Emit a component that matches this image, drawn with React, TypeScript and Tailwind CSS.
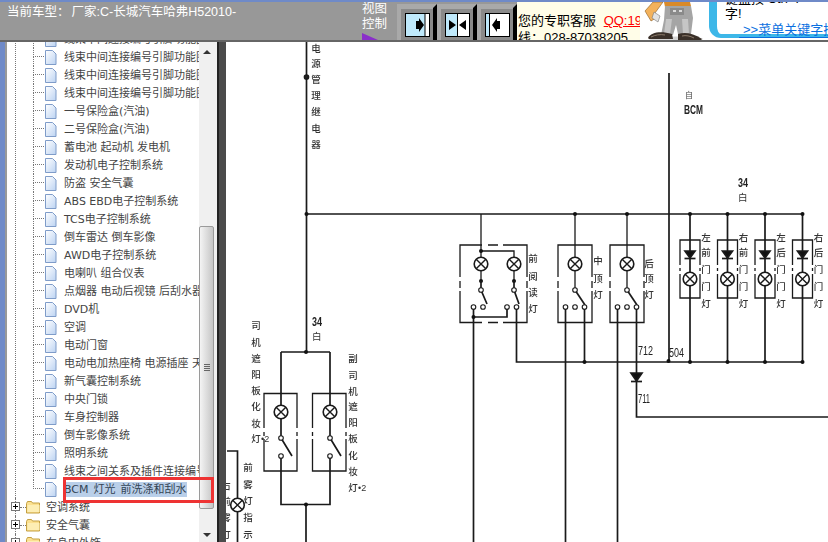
const cjk = "font-['Liberation_Sans','Noto_Sans_CJK_SC',sans-serif]"

const chapters = [
  '线束中间连接编号引脚功能图',
  '线束中间连接编号引脚功能图',
  '线束中间连接编号引脚功能图',
  '线束中间连接编号引脚功能图',
  '一号保险盒(汽油)',
  '二号保险盒(汽油)',
  '蓄电池 起动机 发电机',
  '发动机电子控制系统',
  '防盗 安全气囊',
  'ABS EBD电子控制系统',
  'TCS电子控制系统',
  '倒车雷达 倒车影像',
  'AWD电子控制系统',
  '电喇叭 组合仪表',
  '点烟器 电动后视镜 后刮水器',
  'DVD机',
  '空调',
  '电动门窗',
  '电动电加热座椅 电源插座 天窗',
  '新气囊控制系统',
  '中央门锁',
  '车身控制器',
  '倒车影像系统',
  '照明系统',
  '线束之间关系及插件连接编号',
  'BCM 灯光 前洗涤和刮水',
]

function FileIcon() {
  return (
    <svg width="13" height="15" viewBox="0 0 13 15" className="shrink-0">
      <defs>
        <linearGradient id="page" x1="0" y1="0" x2="1" y2="1">
          <stop offset="0" stopColor="#ffffff" />
          <stop offset="1" stopColor="#bcd3f2" />
        </linearGradient>
      </defs>
      <path d="M1.5.5h7l3.5 3.5v10.5h-10.500z" fill="url(#page)" stroke="#7f9cc9" />
    </svg>
  )
}

function FolderIcon() {
  return (
    <svg width="15" height="14" viewBox="0 0 15 14" className="shrink-0">
      <path d="M.5 3.500l1-2h4l1 1.500h7v10h-13z" fill="#fbe08f" stroke="#c4a043" />
      <path d="M1.500 5h12v7h-12z" fill="#fdeeb4" />
    </svg>
  )
}

function TreeRow({ label, last, selected }: { label: string; last?: boolean; selected?: boolean }) {
  return (
    <div className="flex h-[18px] items-center">
      <div className="h-full w-[11px] shrink-0">
        <div className="h-[9px] border-b border-l border-dotted border-[#777]" />
        {!last && <div className="h-[9px] border-l border-dotted border-[#777]" />}
      </div>
      <FileIcon />
      <span className={`ml-[7px] text-[11px] leading-[15px] ${selected ? 'bg-[#b9cfe9] text-[#345] [word-spacing:1.500px]' : 'text-[#444]'}`}>
        {label}
      </span>
    </div>
  )
}

function FolderRow({ label }: { label: string }) {
  return (
    <div className="flex h-[18px] items-center">
      <div className="flex h-full w-[9px] shrink-0 flex-col items-center">
        <div className="h-[4px] border-l border-dotted border-[#777]" />
        <svg width="9" height="9" viewBox="0 0 9 9" className="shrink-0">
          <rect x=".5" y=".5" width="8" height="8" fill="#fff" stroke="#777" />
          <path d="M2 4.500H7M4.500 2V7" stroke="#000" />
        </svg>
        <div className="h-[5px] border-l border-dotted border-[#777]" />
      </div>
      <div className="w-[6px] shrink-0 border-t border-dotted border-[#777]" />
      <FolderIcon />
      <span className="ml-[5px] text-[11px] leading-[15px] text-[#444]">{label}</span>
    </div>
  )
}

function ViewButton({ children }: { children: React.ReactNode }) {
  return (
    <div className="flex h-[36px] w-[40px] bg-[#a9a9a9] pl-[4px]">
      <div className="mt-[5px] flex h-[31px] w-[32px] justify-center bg-[#8a8a8a] pt-[4px]">
        <svg width="25" height="24" viewBox="0 0 25 24">
          {children}
        </svg>
      </div>
      <div className="h-full w-[4px] bg-black [clip-path:polygon(0_4px,100%_0,100%_100%,0_100%)]" />
    </div>
  )
}

function Mascot() {
  return (
    <svg width="65" height="40" viewBox="0 0 65 40" className="shrink-0">
      <rect width="65" height="40" fill="#fff" />
      <ellipse cx="36" cy="37" rx="27" ry="2.500" fill="#d4d4d4" />
      <path d="M5 9l8-9h10l-8 11 1 5-5 3z" fill="#f3b25c" stroke="#8a5a20" strokeWidth=".6" />
      <path d="M14 10l6 4-2 6-6-4z" fill="#e2e2e2" stroke="#777" strokeWidth=".6" />
      <path d="M24 0h26l1 4-26 1z" fill="#d98a2a" />
      <path d="M25 4h26l2 12-2 16H38l-2-9-3 10H21l3-15z" fill="#a5a5a5" />
      <path d="M30 6h14v7H30z" fill="#8a8a8a" />
      <path d="M33 8h3v2h-3zM39 8h3v2h-3z" fill="#dcdcdc" />
      <path d="M26 17h6l-2 15h-6zM42 17h6l1 15h-6z" fill="#c6c6c6" />
      <path d="M8 36c3-6 13-7 24-4l1 5H9z" fill="#3a3029" />
      <path d="M38 32c7-2 15-1 24 5l-1 1H38z" fill="#3a3029" />
      <path d="M11 35c4-2 9-3 14-2" stroke="#8b7a6a" fill="none" />
      <path d="M42 34c4-1 8 0 12 2" stroke="#8b7a6a" fill="none" />
    </svg>
  )
}

function Lamp({ x, y }: { x: number; y: number }) {
  return (
    <g>
      <circle cx={x} cy={y} r="6.800" fill="#fff" stroke="#1a1a1a" strokeWidth="1.600" />
      <path d={`M${x - 4.800} ${y - 4.800}L${x + 4.800} ${y + 4.800}M${x + 4.800} ${y - 4.800}L${x - 4.800} ${y + 4.800}`} stroke="#1a1a1a" strokeWidth="1.400" />
    </g>
  )
}

function Dot({ x, y }: { x: number; y: number }) {
  return <circle cx={x} cy={y} r="2" fill="#111" stroke="none" />
}

function Open({ x, y }: { x: number; y: number }) {
  return <circle cx={x} cy={y} r="2.300" fill="#fff" stroke="#1a1a1a" strokeWidth="1.100" />
}

function Label({ x, chars, ys }: { x: number; chars: string; ys: number[] }) {
  return (
    <>
      {Array.from(chars).map((c, i) => (
        <text key={i} x={x} y={ys[i] + 4} textAnchor="middle" fontSize="9.500" fontWeight="500" fill="#333" stroke="none">
          {c}
        </text>
      ))}
    </>
  )
}

function Diagram() {
  const doors = [
    { x: 690, l: '左前门门灯' },
    { x: 727.500, l: '右前门门灯' },
    { x: 765, l: '左后门门灯' },
    { x: 802.500, l: '右后门门灯' },
  ]
  const doorYs = [236, 251, 268, 285, 302]

  return (
    <svg
      width="602"
      height="501"
      viewBox="226 41 602 501"
      className="block blur-[0.3px] font-['Noto_Sans_CJK_SC',sans-serif]"
      fill="none"
      stroke="#1a1a1a"
      strokeWidth="1.700"
    >
      {/* power feed and bus */}
      <path d="M306.500 41V351M306.500 213H803M669 72V361" />
      <circle cx="306.500" cy="76" r="2" fill="#222" />
      <Dot x={306.500} y={213} />
      <Label x={316} chars="电源管理继电器" ys={[47, 62, 78, 94, 110, 127, 143]} />
      <text x="685" y="97" fontSize="8" fill="#444" stroke="none">自</text>
      <text x="684" y="113" fontSize="12" fontWeight="700" fill="#222" stroke="none" fontFamily="Liberation Sans" textLength="19" lengthAdjust="spacingAndGlyphs">BCM</text>

      <text x="738" y="186" fontSize="12" fontWeight="700" fill="#222" stroke="none" fontFamily="Liberation Sans" textLength="10" lengthAdjust="spacingAndGlyphs">34</text>
      <text x="738" y="200" fontSize="9.500" fill="#333" stroke="none">白</text>

      {/* front reading lamps */}
      <path d="M481 213V280M481 250H514V280M460 276V244H482M488 244H498M503 244H527V276M460 280V287M527 280V287M460 290V321.500H482M488 321.500H498M503 321.500H527V290" strokeWidth="1.300" />
      <Dot x={481} y={250} />
      <Lamp x={481} y={263} />
      <Lamp x={514} y={263} />
      <Dot x={481} y={280} />
      <Dot x={514} y={280} />
      <path d="M481 280V289L487 303M514 280V289L519 303" />
      <Open x={481} y={289} />
      <Open x={514} y={289} />
      <Open x={473.500} y={306} />
      <Open x={483} y={306} />
      <Open x={507} y={306} />
      <Open x={516.500} y={306} />
      <path d="M473.500 308V542M473.500 316H507V308M516.500 308V361H803" />
      <Dot x={473.500} y={316} />
      <Label x={533} chars="前阅读灯" ys={[257, 275, 291, 307]} />

      {/* centre and rear dome lamps */}
      {[
        { x: 575, l: 558, r: 592, label: '中顶灯', lx: 598, ys: [259, 277, 293] },
        { x: 627, l: 610, r: 644, label: '后顶灯', lx: 649, ys: [262, 277, 293] },
      ].map((b) => (
        <g key={b.x}>
          <path d={`M${b.x} 213V289M${b.l} 276V244H${b.r}V276M${b.l} 280V287M${b.r} 280V287M${b.l} 290V321.500H${b.r}V290`} strokeWidth="1.300" />
          <Dot x={b.x} y={213} />
          <Lamp x={b.x} y={263} />
          <path d={`M${b.x} 289L${b.x + 10} 304`} />
          <Open x={b.x} y={289} />
          <Open x={b.x - 9.500} y={306} />
          <Open x={b.x} y={306} />
          <Open x={b.x + 9.500} y={306} />
          <path d={`M${b.x - 9.500} 308V542`} />
          <Label x={b.lx} chars={b.label} ys={b.ys} />
        </g>
      ))}
      <path d="M584.500 308V361M636.500 308V416H828" />
      <Dot x={584.500} y={361} />
      <path d="M631 372H642L636.500 380Z" fill="#111" />
      <path d="M631 380.500H642" />
      <text x="638" y="354" fontSize="12" fill="#222" stroke="none" fontFamily="Liberation Sans" textLength="15" lengthAdjust="spacingAndGlyphs">712</text>
      <text x="669" y="356" fontSize="12" fill="#222" stroke="none" fontFamily="Liberation Sans" textLength="15" lengthAdjust="spacingAndGlyphs">504</text>
      <text x="638" y="402" fontSize="12" fill="#222" stroke="none" fontFamily="Liberation Sans" textLength="12" lengthAdjust="spacingAndGlyphs">711</text>
      <Dot x={668.500} y={360} />

      {/* door lamps */}
      {doors.map((d) => (
        <g key={d.x}>
          <path d={`M${d.x} 213V361`} />
          <path d={`M${d.x - 10} 264V239H${d.x + 10}V264M${d.x - 10} 267V270M${d.x + 10} 267V270M${d.x - 10} 273V297H${d.x + 10}V273`} strokeWidth="1.300" />
          <Dot x={d.x} y={213} />
          <Dot x={d.x} y={361} />
          <path d={`M${d.x - 5} 250H${d.x + 5}L${d.x} 257Z`} fill="#111" />
          <path d={`M${d.x - 5.500} 257.500H${d.x + 5.500}`} />
          <Lamp x={d.x} y={278} />
          <Label x={d.x + 16} chars={d.l} ys={doorYs} />
        </g>
      ))}

      {/* sun visor lamps */}
      <path d="M281 351H330M281 351V437M330 351V437M281 457V503.500H330V457M306 503.500V542" />
      <path d="M264 427V392.500H297V427M264 431V435M297 431V435M264 438V470H297V438M312.500 427V392.500H346V427M312.500 431V435M346 431V435M312.500 438V470H346V438" strokeWidth="1.300" />
      <Dot x={306} y={351} />
      <Dot x={306} y={503.500} />
      <Lamp x={281} y={411} />
      <Lamp x={330} y={411} />
      <path d="M281 437L292 455M330 437L341 455" />
      <Open x={281} y={437} />
      <Open x={281} y={455} />
      <Open x={330} y={437} />
      <Open x={330} y={455} />
      <text x="312" y="325" fontSize="12" fontWeight="700" fill="#222" stroke="none" fontFamily="Liberation Sans" textLength="10" lengthAdjust="spacingAndGlyphs">34</text>
      <text x="312" y="339" fontSize="9.500" fill="#333" stroke="none">白</text>
      <Label x={256} chars="司机遮阳板化妆灯" ys={[324, 341, 357, 373, 389, 405, 422, 437]} />
      <text x="261" y="441" fontSize="9" fill="#333" stroke="none" fontFamily="Liberation Sans">•2</text>
      <Label x={353} chars="副司机遮阳板化妆灯" ys={[357, 374, 390, 405, 421, 437, 454, 470, 486]} />
      <text x="358" y="490" fontSize="9" fill="#333" stroke="none" fontFamily="Liberation Sans">•2</text>

      {/* fog lamp indicator */}
      <path d="M227 450H237.500V542" />
      <Lamp x={237.500} y={504} />
      <Label x={248} chars="前雾灯指示" ys={[466, 483, 499, 516, 533]} />
      <Label x={226} chars="右前雾灯" ys={[484, 500, 516, 533]} />
    </svg>
  )
}

export default function App() {
  return (
    <div className={`flex h-[542px] w-[828px] flex-col overflow-hidden bg-[#999] ${cjk}`}>
      {/* top bar */}
      <div className="h-[2px] shrink-0 bg-[#6f8ac8]" />
      <div className="flex h-[38px] shrink-0 overflow-hidden bg-[#989898]">
        <div className="w-[362px] shrink-0 pl-[7px] pt-[1px] text-[12.500px] leading-[18px] whitespace-nowrap text-white">
          当前车型：<span className="ml-[2px]">厂家:C-长城汽车哈弗H52010-</span>
        </div>
        <div className="w-[35px] shrink-0 text-[12.500px] leading-[15px] text-white">
          <div>视图</div>
          <div>控制</div>
          <svg width="16" height="7" viewBox="0 0 16 7" className="mt-[1px] block">
            <path d="M0 0L16 7H0z" fill="#8a2fc9" />
          </svg>
        </div>
        <div className="flex shrink-0 pt-[2px]">
          <ViewButton>
            <rect x=".5" y=".5" width="24" height="23" fill="#bfe9fb" stroke="#000" />
            <rect x="20" y="1" width="4" height="22" fill="#fff" />
            <path d="M20 1V23" stroke="#000" />
            <path d="M11 8h3V5l5 7-5 7v-3h-3z" fill="#000" />
          </ViewButton>
          <ViewButton>
            <rect x=".5" y=".5" width="24" height="23" fill="#fff" stroke="#000" />
            <rect x="1" y="1" width="11" height="22" fill="#bfe9fb" />
            <path d="M12.500 1V23" stroke="#000" />
            <path d="M4 7l7 5-7 5zM21 7l-7 5 7 5z" fill="#000" />
          </ViewButton>
          <ViewButton>
            <rect x=".5" y=".5" width="24" height="23" fill="#fff" stroke="#000" />
            <rect x="1" y="1" width="3" height="22" fill="#bfe9fb" />
            <path d="M4.500 1V23" stroke="#000" />
            <path d="M15 8h-3V5l-5 7 5 7v-3h3z" fill="#000" />
          </ViewButton>
        </div>
        <div className="w-[123px] shrink-0 overflow-hidden bg-[#fffde8] pl-[1px] pt-[10px] text-[13px] leading-[17px] whitespace-nowrap text-black">
          <div>
            您的专职客服 <span className="ml-[4px] text-[#f00] underline">QQ:19</span>
          </div>
          <div>线：028-87038205</div>
        </div>
        <Mascot />
        <div className="relative flex-1 overflow-hidden bg-white pl-[4px]">
          <div className="flow-root h-[36px] rounded-bl-[12px] border-b-[4px] border-l-[8px] border-[#3db7e8] pl-[8px] text-[13px] leading-[15px] text-black">
            <div className="-mt-[11px] whitespace-nowrap">键盘按 Ctrl+F</div>
            <div>字!</div>
          </div>
          <div className="absolute left-[34px] top-[21px] border-b border-[#0a6fe0] pl-[4px] text-[13px] leading-[14px] whitespace-nowrap text-[#0a6fe0]">
            &gt;&gt;菜单关键字搜索
          </div>
        </div>
      </div>
      <div className="h-[2px] shrink-0 bg-[#666]" />

      {/* main */}
      <div className="flex min-h-0 flex-1">
        <div className="w-[5px] shrink-0 bg-[#6f8ac8]" />
        <div className="w-[2px] shrink-0 bg-[#999]" />

        {/* tree */}
        <div className="relative w-[192px] shrink-0 overflow-hidden bg-white whitespace-nowrap font-['DejaVu_Sans','Noto_Sans_CJK_SC',sans-serif]">
          <div className="-mt-[12px] ml-[8px]">
            <div className="border-l border-dotted border-[#777] pl-[17px]">
              {chapters.map((c, i) => (
                <TreeRow key={i} label={c} last={i === chapters.length - 1} selected={i === chapters.length - 1} />
              ))}
            </div>
            <div className="-ml-[4px]">
              <FolderRow label="空调系统" />
              <FolderRow label="安全气囊" />
              <FolderRow label="车身内外饰" />
            </div>
          </div>
        </div>

        {/* scrollbar */}
        <div className="flex w-[18px] shrink-0 flex-col bg-[#f0f0f0]">
          <div className="flex h-[184px] shrink-0 justify-center pr-[3px] pt-[8px]">
            <div className="h-0 w-0 border-x-[4px] border-b-[4px] border-x-transparent border-b-[#333]" />
          </div>
          <div className="flex h-[283px] w-[15px] shrink-0 flex-col items-center justify-center gap-[1px] rounded-[2px] border border-[#9a9a9a] bg-gradient-to-r from-[#f4f4f4] to-[#c6c6c6]">
            <div className="h-px w-[6px] bg-[#666]" />
            <div className="h-px w-[6px] bg-[#666]" />
            <div className="h-px w-[6px] bg-[#666]" />
            <div className="h-px w-[6px] bg-[#666]" />
          </div>
          <div className="flex flex-1 justify-center pr-[3px] pt-[24px]">
            <div className="h-0 w-0 border-x-[4px] border-t-[4px] border-x-transparent border-t-[#333]" />
          </div>
        </div>

        {/* splitter */}
        <div className="w-[2px] shrink-0 bg-[#222]" />
        <div className="w-[7px] shrink-0 bg-[#4b4b4b]" />

        {/* diagram */}
        <div className="min-w-0 flex-1 overflow-hidden bg-white">
          <Diagram />
        </div>
      </div>

      {/* red highlight drawn over the selected row */}
      <div className="absolute left-[63px] top-[477px] h-[26px] w-[151px] border-[3px] border-[#ee3333]" />
    </div>
  )
}
